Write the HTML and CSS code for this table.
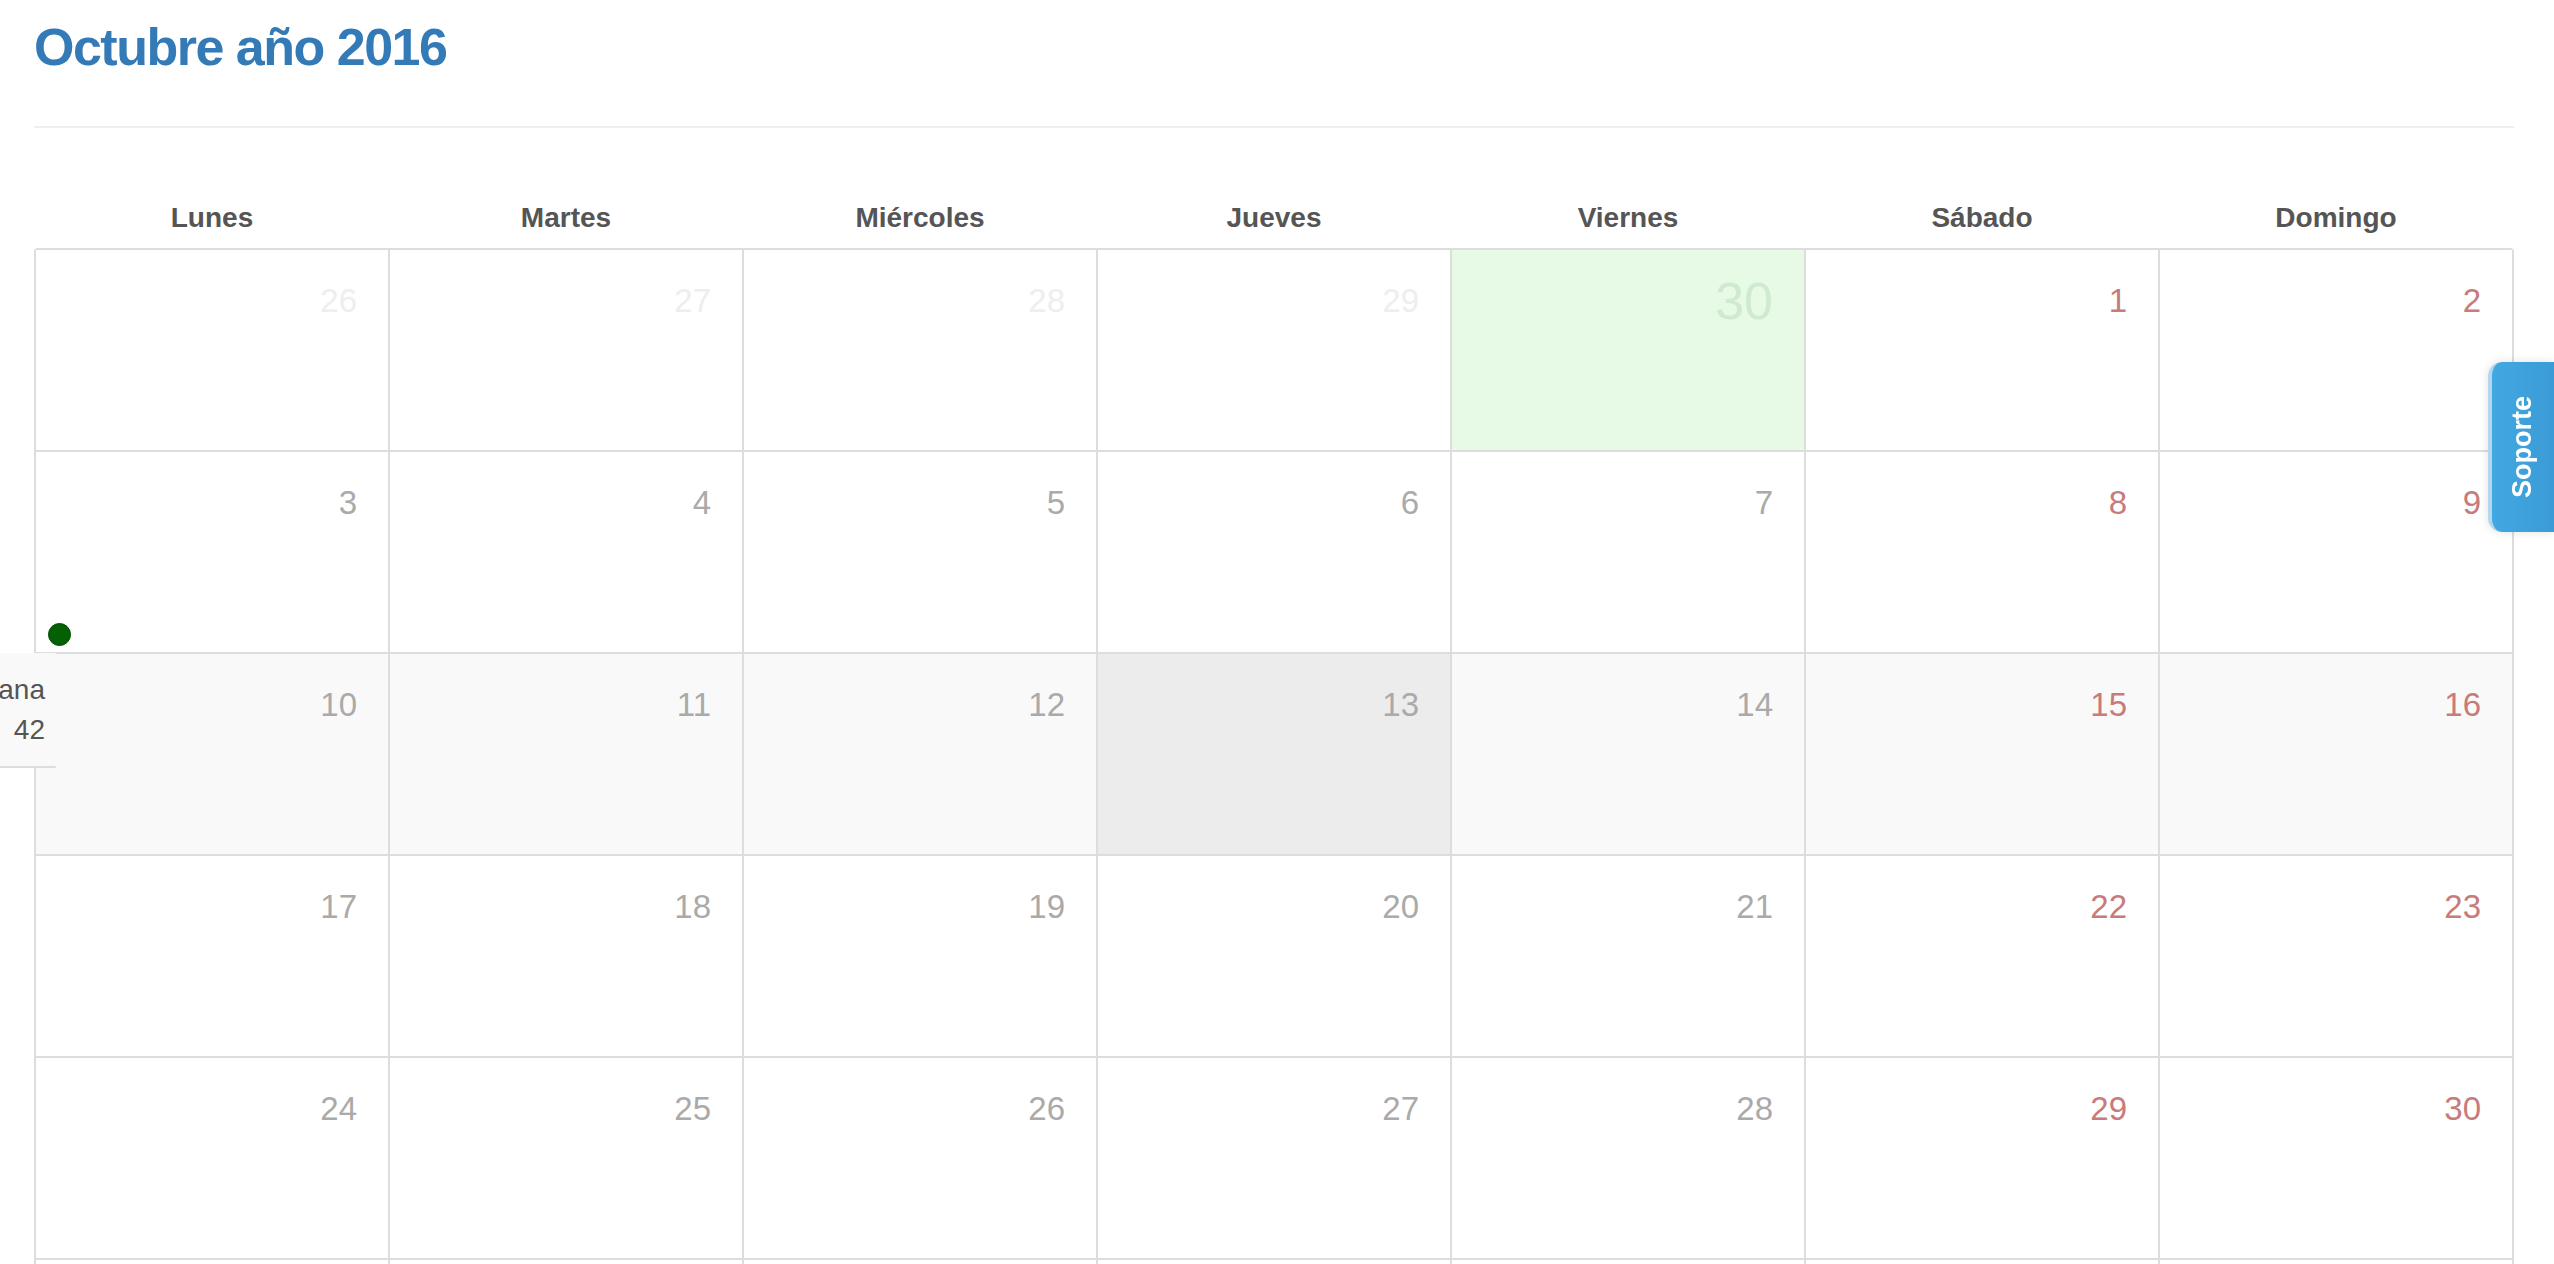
FILE: index.html
```html
<!DOCTYPE html>
<html lang="es">
<head>
<meta charset="utf-8">
<title>Calendario</title>
<link rel="stylesheet" href="styles.css">
</head>
<body>
<div class="page">
  <h1 class="title">Octubre año 2016</h1>
  <hr class="rule">
  <div class="weekdays">
    <div>Lunes</div><div>Martes</div><div>Miércoles</div><div>Jueves</div><div>Viernes</div><div>Sábado</div><div>Domingo</div>
  </div>
  <div class="cal-wrap">
    <div class="cal">
      <div class="day other"><span>26</span></div>
      <div class="day other"><span>27</span></div>
      <div class="day other"><span>28</span></div>
      <div class="day other"><span>29</span></div>
      <div class="day today"><span>30</span></div>
      <div class="day weekend"><span>1</span></div>
      <div class="day weekend"><span>2</span></div>

      <div class="day"><span>3</span><i class="dot"></i></div>
      <div class="day"><span>4</span></div>
      <div class="day"><span>5</span></div>
      <div class="day"><span>6</span></div>
      <div class="day"><span>7</span></div>
      <div class="day weekend"><span>8</span></div>
      <div class="day weekend"><span>9</span></div>

      <div class="day hl"><span>10</span></div>
      <div class="day hl"><span>11</span></div>
      <div class="day hl"><span>12</span></div>
      <div class="day sel"><span>13</span></div>
      <div class="day hl"><span>14</span></div>
      <div class="day hl weekend"><span>15</span></div>
      <div class="day hl weekend"><span>16</span></div>

      <div class="day"><span>17</span></div>
      <div class="day"><span>18</span></div>
      <div class="day"><span>19</span></div>
      <div class="day"><span>20</span></div>
      <div class="day"><span>21</span></div>
      <div class="day weekend"><span>22</span></div>
      <div class="day weekend"><span>23</span></div>

      <div class="day"><span>24</span></div>
      <div class="day"><span>25</span></div>
      <div class="day"><span>26</span></div>
      <div class="day"><span>27</span></div>
      <div class="day"><span>28</span></div>
      <div class="day weekend"><span>29</span></div>
      <div class="day weekend"><span>30</span></div>

      <div class="day"></div>
      <div class="day"></div>
      <div class="day"></div>
      <div class="day"></div>
      <div class="day"></div>
      <div class="day"></div>
      <div class="day"></div>
    </div>
    <div class="week-tip">Semana<br>42</div>
  </div>
</div>
<div class="support">Soporte</div>
</body>
</html>
```
FILE: styles.css
```css
html, body {
  margin: 0;
  padding: 0;
  height: 1264px;
  overflow: hidden;
  background: #fff;
}
body {
  font-family: "Liberation Sans", Arial, Helvetica, sans-serif;
  color: #333;
}
.page {
  width: 2480px;
  margin-left: 34px;
}
.title {
  margin: 17px 0 0 0;
  font-size: 52px;
  line-height: 60px;
  font-weight: bold;
  letter-spacing: -1.5px;
  color: #337ab7;
}
.rule {
  margin: 49px 0 0 0;
  border: 0;
  height: 2px;
  background: #eeeeee;
}
.weekdays {
  margin-top: 70px;
  padding: 0 2px 10px 2px;
  display: grid;
  grid-template-columns: repeat(7, 1fr);
  column-gap: 2px;
  font-size: 28px;
  line-height: 40px;
  font-weight: bold;
  color: #555;
  text-align: center;
}
.cal-wrap {
  position: relative;
}
.cal {
  display: grid;
  grid-template-columns: repeat(7, 1fr);
  grid-auto-rows: 200px;
  gap: 2px;
  background: #dddddd;
  border: 2px solid #dddddd;
  border-radius: 4px 4px 0 0;
}
.day {
  position: relative;
  background: #fff;
  padding: 31px 31px 0 0;
  text-align: right;
  font-size: 33px;
  line-height: 40px;
  color: #aaaaaa;
}
.day.other { color: #eeeeee; }
.day.weekend { color: #c77b7b; }
.day.hl { background: #f9f9f9; }
.day.sel { background: #ececec; }
.day.today {
  background: #e6fae6;
  color: #cfeacf;
  font-size: 52px;
}
.dot {
  position: absolute;
  left: 12px;
  bottom: 6px;
  width: 21px;
  height: 21px;
  border-radius: 50%;
  background: #036003;
  border: 1px solid #024a02;
}
.week-tip {
  position: absolute;
  left: 22px;
  top: 405px;
  transform: translateX(-100%);
  background: #f9f9f9;
  border-bottom: 2px solid #dddddd;
  padding: 17px 11px 16px 12px;
  font-size: 28px;
  line-height: 40px;
  color: #555;
  text-align: right;
  white-space: nowrap;
}
.support {
  position: fixed;
  right: 0;
  top: 362px;
  width: 66px;
  height: 170px;
  box-sizing: border-box;
  writing-mode: vertical-rl;
  transform: rotate(180deg);
  border-right: 4px solid #b3d7ee;
  border-radius: 0 14px 14px 0;
  background: linear-gradient(to left, #42a8e2, #3b9bd6);
  box-shadow: 0 0 10px rgba(0, 0, 0, 0.12);
  color: #fff;
  font-weight: bold;
  font-size: 27px;
  display: flex;
  align-items: center;
  justify-content: center;
}
```
